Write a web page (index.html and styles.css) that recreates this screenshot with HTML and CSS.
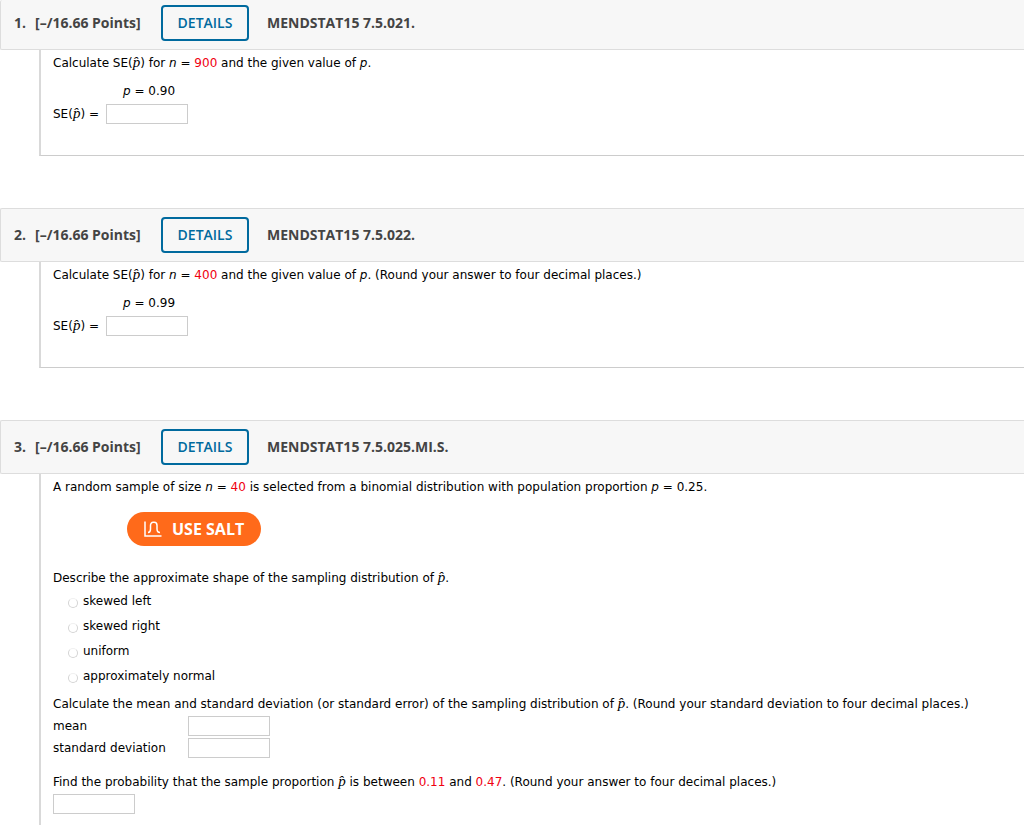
FILE: index.html
```html
<!DOCTYPE html>
<html lang="en">
<head>
  <meta charset="UTF-8" />
  <meta name="viewport" content="width=device-width, initial-scale=1.0" />
  <title>Homework 7.5</title>
  <link rel="stylesheet" href="styles.css">
</head>
<body>

<main>
  <section class="question">
    <header class="question-header">
      <span class="number">1.</span>
      <span class="points">[–/16.66 Points]</span>
      <button type="button" class="details">DETAILS</button>
      <h2>MENDSTAT15 7.5.021.</h2>
    </header>
    <div class="question-body">
      <p>Calculate SE(<i class="hat">p̂</i>) for <i>n</i> = <span class="value">900</span> and the given value of <i>p</i>.</p>
      <p class="given"><i>p</i> = 0.90</p>
      <div class="answer">
        <label for="se1">SE(<i class="hat">p̂</i>) =</label>
        <input type="text" id="se1" name="se1">
      </div>
    </div>
  </section>

  <section class="question">
    <header class="question-header">
      <span class="number">2.</span>
      <span class="points">[–/16.66 Points]</span>
      <button type="button" class="details">DETAILS</button>
      <h2>MENDSTAT15 7.5.022.</h2>
    </header>
    <div class="question-body">
      <p>Calculate SE(<i class="hat">p̂</i>) for <i>n</i> = <span class="value">400</span> and the given value of <i>p</i>. (Round your answer to four decimal places.)</p>
      <p class="given"><i>p</i> = 0.99</p>
      <div class="answer">
        <label for="se2">SE(<i class="hat">p̂</i>) =</label>
        <input type="text" id="se2" name="se2">
      </div>
    </div>
  </section>

  <section class="question">
    <header class="question-header">
      <span class="number">3.</span>
      <span class="points">[–/16.66 Points]</span>
      <button type="button" class="details">DETAILS</button>
      <h2>MENDSTAT15 7.5.025.MI.S.</h2>
    </header>
    <div class="question-body">
      <p>A random sample of size <i>n</i> = <span class="value">40</span> is selected from a binomial distribution with population proportion <i>p</i> = 0.25.</p>
      <button type="button" class="salt">
        <svg width="18" height="17" viewBox="0 0 18 17" fill="none" stroke="currentColor" stroke-width="1.5" aria-hidden="true">
          <path d="M1 0.5V15H17.5" />
          <path d="M4 11.5C6 11.5 6.5 10 6.5 8V4.5C6.5 2.5 7.5 1.3 9.2 1.3H10.2C12 1.3 13 2.5 13 4.5V8C13 10 13.6 11.5 16 11.5" />
        </svg>
        USE SALT
      </button>

      <fieldset>
        <legend>Describe the approximate shape of the sampling distribution of <i class="hat">p̂</i>.</legend>
        <label class="option"><input type="radio" name="shape" value="left">skewed left</label>
        <label class="option"><input type="radio" name="shape" value="right">skewed right</label>
        <label class="option"><input type="radio" name="shape" value="uniform">uniform</label>
        <label class="option"><input type="radio" name="shape" value="normal">approximately normal</label>
      </fieldset>

      <p>Calculate the mean and standard deviation (or standard error) of the sampling distribution of <i class="hat">p̂</i>. (Round your standard deviation to four decimal places.)</p>
      <div class="stats">
        <label for="mean">mean</label>
        <input type="text" id="mean" name="mean">
        <label for="sd">standard deviation</label>
        <input type="text" id="sd" name="sd">
      </div>

      <p><label for="prob">Find the probability that the sample proportion <i class="hat">p̂</i> is between <span class="value">0.11</span> and <span class="value">0.47</span>. (Round your answer to four decimal places.)</label></p>
      <div class="answer">
        <input type="text" id="prob" name="prob">
      </div>
    </div>
  </section>
</main>

</body>
</html>
```
FILE: styles.css
```css
* {
  box-sizing: border-box;
}
body {
  margin: 0;
  background: #fff;
  color: #000;
  font-family: Verdana, "DejaVu Sans", sans-serif;
  font-size: 12px;
  line-height: 18px;
}
main {
  overflow: hidden;
}
.question {
  margin-bottom: 52px;
}
.question:last-child {
  margin-bottom: 0;
}
.question-header {
  display: flex;
  align-items: center;
  padding: 8px 13px;
  background: #f7f7f7;
  border: 1px solid #ddd;
  border-right: none;
  border-radius: 2px 0 0 2px;
  color: #444;
  font-family: "Open Sans", sans-serif;
  font-size: 14px;
  font-weight: 700;
}
.question:first-child .question-header {
  padding-top: 5px;
  border-top: none;
}
.number {
  width: 21px;
}
.points {
  min-width: 108px;
}
.details {
  width: 88px;
  height: 36px;
  margin: 0 18px;
  padding: 0 0 2px;
  background: transparent;
  border: 2px solid #006a9e;
  border-radius: 4px;
  color: #006a9e;
  font: 600 14px "Open Sans", sans-serif;
  cursor: pointer;
}
h2 {
  margin: 0;
  font-size: 14px;
}
.question-body {
  margin-left: 39px;
  padding: 4px 0 31px 12px;
  border-left: 2px solid #d9d9d9;
  border-bottom: 1px solid #ccc;
}
.question:last-child .question-body {
  padding-bottom: 11px;
  border-bottom: none;
}
p {
  margin: 0;
}
.hat {
  font-family: "Liberation Serif", serif;
  font-size: 15px;
  line-height: 1;
}
.value {
  color: #f00010;
}
.given {
  margin: 10px 0 4px 70px;
}
.answer {
  display: flex;
  align-items: center;
  gap: 7px;
}
input[type="text"] {
  width: 82px;
  height: 20px;
  padding: 1px 3px;
  background: #fff;
  border: 1px solid #ccc;
  font: inherit;
}
.salt {
  display: flex;
  align-items: center;
  gap: 10px;
  height: 34px;
  margin: 16px 0 23px 74px;
  padding: 0 17px;
  background: #ff6a1a;
  border: none;
  border-radius: 17px;
  color: #fff;
  font: 700 16px "Open Sans", sans-serif;
  cursor: pointer;
}
fieldset {
  margin: 0 0 7px;
  padding: 0;
  border: none;
}
legend {
  margin-bottom: 1px;
  padding: 0;
}
.option {
  display: flex;
  align-items: center;
  gap: 5px;
  height: 25px;
  padding-left: 15px;
}
.option input {
  appearance: none;
  width: 10px;
  height: 10px;
  margin: 5px 0 0;
  border: 1px solid #d4d4d4;
  border-top-color: #f0f0f0;
  border-radius: 50%;
}
.option input:checked {
  background: #006a9e;
}
.stats {
  display: grid;
  grid-template-columns: 135px 82px;
  row-gap: 2px;
  align-items: center;
  margin: 3px 0 15px;
}
.question:last-child .answer {
  margin-top: 3px;
}
```
